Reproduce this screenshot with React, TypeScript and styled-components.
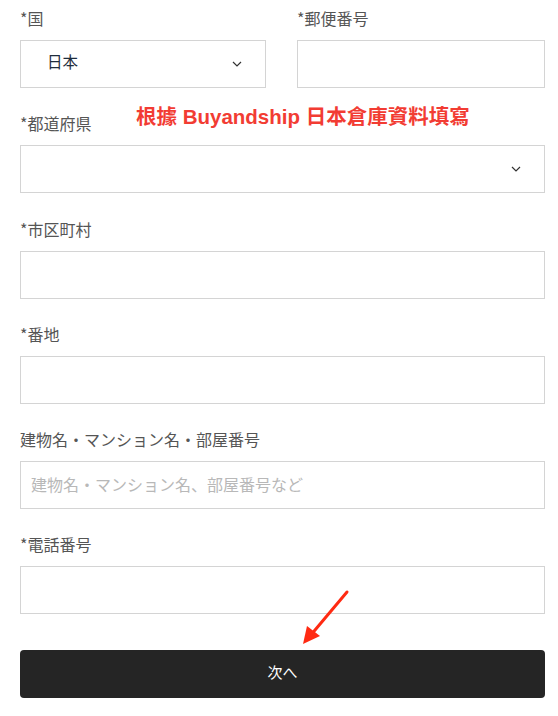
import React, { FC } from 'react';
import styled, { createGlobalStyle } from 'styled-components';

const GlobalStyle = createGlobalStyle`
    html, body {
        margin: 0;
        padding: 0;
        background: #ffffff;
    }
    body {
        font-family: "Noto Sans CJK JP", "Noto Sans", sans-serif;
    }
`;

const Page = styled.div`
    position: relative;
    width: 558px;
    box-sizing: border-box;
    padding: 7px 13px 0 20px;
`;

const Row = styled.div`
    display: grid;
    grid-template-columns: 246px 248px;
    column-gap: 31px;
`;

const Field = styled.div`
    display: flex;
    flex-direction: column;
    margin-bottom: 24.3px;
`;

const Label = styled.label`
    font-size: 16px;
    line-height: 22px;
    height: 22px;
    color: #555555;
    margin-bottom: 11px;
`;

const Box = styled.div`
    position: relative;
    box-sizing: border-box;
    height: 48px;
    border: 1px solid #d4d4d4;
    background: #ffffff;
    display: flex;
    align-items: center;
`;

const Input = styled.input`
    box-sizing: border-box;
    width: 100%;
    height: 100%;
    border: none;
    outline: none;
    background: transparent;
    padding: 0 10px 3px;
    font-family: inherit;
    font-size: 16px;
    color: #333333;

    &::placeholder {
        color: #b8b8b8;
    }
`;

const SelectValue = styled.span<{ inset: number }>`
    flex: 1;
    padding-left: ${ p => p.inset }px;
    padding-bottom: 6px;
    font-size: 15.5px;
    color: #1f2d3d;
`;

const Chevron = styled.svg<{ right: number }>`
    width: 10px;
    height: 6px;
    margin-right: ${ p => p.right }px;
    flex-shrink: 0;
`;

const Button = styled.button`
    width: 100%;
    height: 48px;
    margin-top: 11px;
    padding-bottom: 5px;
    border: none;
    border-radius: 4px;
    background: #252525;
    color: #ffffff;
    font-family: inherit;
    font-size: 15px;
    cursor: pointer;
`;

const Note = styled.div`
    position: absolute;
    left: 136px;
    top: 104px;
    font-family: "Liberation Sans", "Noto Sans CJK TC", sans-serif;
    font-weight: bold;
    font-size: 20.5px;
    line-height: 26px;
    color: #f23c33;
    white-space: nowrap;
`;

const Arrow = styled.svg`
    position: absolute;
    left: 296px;
    top: 584px;
    width: 60px;
    height: 66px;
    overflow: visible;
`;

// #################################################################################

const ChevronIcon: FC<{ right: number }> = ({ right }) => (
    <Chevron right={ right } viewBox='0 0 10 6'>
        <path d='M1 1 L5 5 L9 1' fill='none' stroke='#333' strokeWidth='1.2' />
    </Chevron>
);

const App: FC = () => (
    <Page>
        <GlobalStyle />
        <Row>
            <Field>
                <Label>*国</Label>
                <Box>
                    <SelectValue inset={ 26 }>日本</SelectValue>
                    <ChevronIcon right={ 23 } />
                </Box>
            </Field>
            <Field>
                <Label>*郵便番号</Label>
                <Box><Input /></Box>
            </Field>
        </Row>
        <Field>
            <Label>*都道府県</Label>
            <Box>
                <SelectValue inset={ 26 } />
                <ChevronIcon right={ 23 } />
            </Box>
        </Field>
        <Field>
            <Label>*市区町村</Label>
            <Box><Input /></Box>
        </Field>
        <Field>
            <Label>*番地</Label>
            <Box><Input /></Box>
        </Field>
        <Field>
            <Label>建物名・マンション名・部屋番号</Label>
            <Box><Input placeholder='建物名・マンション名、部屋番号など' /></Box>
        </Field>
        <Field>
            <Label>*電話番号</Label>
            <Box><Input /></Box>
        </Field>
        <Button>次へ</Button>

        <Note>根據 Buyandship 日本倉庫資料填寫</Note>
        <Arrow viewBox='0 0 60 66'>
            <line x1='51' y1='8' x2='14' y2='52' stroke='#ff2a12' strokeWidth='3' strokeLinecap='round' />
            <polygon points='7,60 11,42 24,52' fill='#ff2a12' />
        </Arrow>
    </Page>
);

export default App;
